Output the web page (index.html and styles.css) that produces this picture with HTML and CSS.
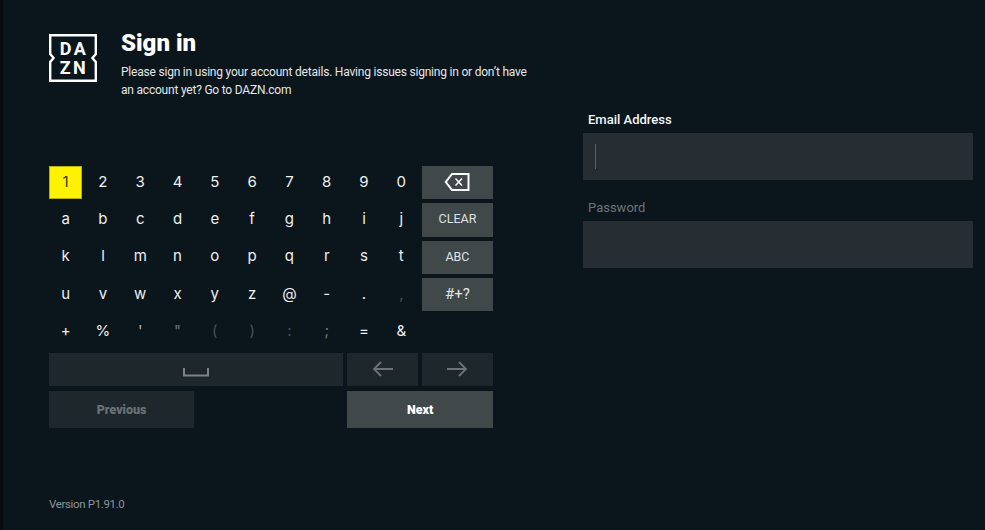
FILE: index.html
```html
<!DOCTYPE html>
<html lang="en">
<head>
<meta charset="utf-8">
<title>Sign in</title>
<link rel="stylesheet" href="styles.css">
</head>
<body>
<main class="page">
  <section class="left">
    <header class="header">
      <div class="logo">
        <svg class="logo-frame" viewBox="0 0 48 48" width="48" height="48" aria-hidden="true">
          <path d="M1.2 1.2H46.8V20L43.4 24L46.8 28V46.8H1.2V28L4.6 24L1.2 20Z" fill="none" stroke="#fff" stroke-width="2.4"/>
        </svg>
        <div class="logo-text"><span>DA</span><span>ZN</span></div>
      </div>
      <div class="intro">
        <h1 class="title">Sign in</h1>
        <p class="desc">Please sign in using your account details. Having issues signing in or don’t have<br>an account yet? Go to DAZN.com</p>
      </div>
    </header>
    <div class="keyboard">
      <div class="key key-focus">1</div><div class="key">2</div><div class="key">3</div><div class="key">4</div><div class="key">5</div><div class="key">6</div><div class="key">7</div><div class="key">8</div><div class="key">9</div><div class="key">0</div>
      <div class="key-side">
        <svg viewBox="0 0 26 20" width="26" height="20" aria-hidden="true"><path d="M24.5 2H8L1.8 10L8 18H24.5Z" fill="none" stroke="#fff" stroke-width="2"/><path d="M11.5 6.5L18 13.5M18 6.5L11.5 13.5" stroke="#fff" stroke-width="1.5" fill="none"/></svg>
      </div>
      <div class="key">a</div><div class="key">b</div><div class="key">c</div><div class="key">d</div><div class="key">e</div><div class="key">f</div><div class="key">g</div><div class="key">h</div><div class="key">i</div><div class="key">j</div>
      <div class="key-side key-label">CLEAR</div>
      <div class="key">k</div><div class="key">l</div><div class="key">m</div><div class="key">n</div><div class="key">o</div><div class="key">p</div><div class="key">q</div><div class="key">r</div><div class="key">s</div><div class="key">t</div>
      <div class="key-side key-label">ABC</div>
      <div class="key">u</div><div class="key">v</div><div class="key">w</div><div class="key">x</div><div class="key">y</div><div class="key">z</div><div class="key">@</div><div class="key">-</div><div class="key">.</div><div class="key key-faint">,</div>
      <div class="key-side key-symbols">#+?</div>
      <div class="key">+</div><div class="key">%</div><div class="key key-mid">'</div><div class="key key-dim">"</div><div class="key key-faint">(</div><div class="key key-faint">)</div><div class="key key-faint">:</div><div class="key key-dim">;</div><div class="key">=</div><div class="key">&amp;</div>
      <div class="key-gap"></div>
      <div class="key-space">
        <svg viewBox="0 0 26 9" width="26" height="9" aria-hidden="true"><path d="M1 0V7.5H25V0" fill="none" stroke="#7d8488" stroke-width="2"/></svg>
      </div>
      <div class="key-arrow key-arrow-left">
        <svg viewBox="0 0 22 16" width="22" height="16" aria-hidden="true"><path d="M21 8H2M9 1L2 8L9 15" fill="none" stroke="#6d7478" stroke-width="1.8"/></svg>
      </div>
      <div class="key-arrow">
        <svg viewBox="0 0 22 16" width="22" height="16" aria-hidden="true"><path d="M1 8H20M13 1L20 8L13 15" fill="none" stroke="#6d7478" stroke-width="1.8"/></svg>
      </div>
      <div class="action action-prev">Previous</div>
      <div class="action action-next">Next</div>
    </div>
    <footer class="version">Version P1.91.0</footer>
  </section>
  <section class="form">
    <div class="field">
      <div class="field-label">Email Address</div>
      <div class="field-input"><span class="caret"></span></div>
    </div>
    <div class="field">
      <div class="field-label field-label-dim">Password</div>
      <div class="field-input"></div>
    </div>
  </section>
</main>
</body>
</html>
```
FILE: styles.css
```css
* { box-sizing: border-box; }
html, body { margin: 0; height: 100%; }
body {
  background: #0a151c;
  border-left: 3px solid #060b0f;
  color: #fff;
  font-family: Roboto, "Liberation Sans", sans-serif;
  overflow: hidden;
}
.page {
  display: flex;
  height: 530px;
  padding-left: 46px;
}
.left {
  width: 444px;
  padding-top: 30px;
  display: flex;
  flex-direction: column;
}
.header {
  display: flex;
  gap: 24px;
  height: 136px;
}
.logo {
  position: relative;
  width: 48px;
  height: 48px;
  margin-top: 4px;
  flex: none;
}
.logo-frame { display: block; }
.logo-text {
  position: absolute;
  inset: 0;
  display: flex;
  flex-direction: column;
  align-items: center;
  justify-content: center;
  font-size: 18px;
  font-weight: 700;
  line-height: 19px;
  letter-spacing: 2.4px;
  padding-left: 2px;
}
.title {
  margin: 0;
  font-size: 24px;
  line-height: 26px;
  font-weight: 900;
}
.desc {
  margin: 7px 0 0;
  font-size: 12px;
  line-height: 18px;
  letter-spacing: -0.21px;
  color: #e4e7e8;
  white-space: nowrap;
}
.keyboard {
  display: grid;
  grid-template-columns: repeat(10, 33.3px) 71px;
  grid-auto-rows: 33.33px;
  column-gap: 4px;
  row-gap: 4px;
}
.key {
  display: flex;
  align-items: center;
  justify-content: center;
  padding-bottom: 3px;
  font-family: Inter, "Liberation Sans", sans-serif;
  font-size: 15px;
  color: #eef0f1;
}
.key-focus { background: #fff200; color: #3a3a10; border: 1px solid #b5ad10; }
.key-mid { color: #b6babc; }
.key-dim { color: #6f7679; }
.key-faint { color: #4a5256; }
.key-side {
  display: flex;
  align-items: center;
  justify-content: center;
  padding-bottom: 2px;
  background: #41484a;
}
.key-label { font-size: 12.5px; color: #dfe2e3; }
.key-symbols { font-size: 15px; color: #e4e6e7; }
.key-space, .key-arrow {
  display: flex;
  justify-content: center;
  background: #1e272c;
}
.key-space {
  grid-column: span 8;
  align-items: flex-end;
  padding-bottom: 9px;
}
.key-arrow { align-items: center; }
.key-arrow-left { grid-column: span 2; }
.action {
  height: 37px;
  margin-top: 1px;
  display: flex;
  align-items: center;
  justify-content: center;
  font-size: 12.5px;
  font-weight: 900;
}
.action-prev {
  grid-column: span 4;
  background: #1e272c;
  color: #6a7175;
}
.action-next {
  grid-column: 9 / 12;
  background: #41484a;
  color: #fff;
}
.version {
  margin-top: 74px;
  font-size: 11.5px;
  line-height: 14px;
  letter-spacing: -0.35px;
  color: #8d9497;
}
.form {
  margin-left: 90px;
  width: 390px;
  padding-top: 111px;
  display: flex;
  flex-direction: column;
  gap: 19px;
}
.field-label {
  font-size: 13px;
  line-height: 18px;
  padding-left: 5px;
  margin-bottom: 4px;
  font-weight: 500;
  color: #f4f5f6;
}
.field-label-dim { color: #6c7478; font-weight: 400; }
.field-input {
  height: 47px;
  background: #272e33;
  display: flex;
  align-items: center;
  padding-left: 12px;
}
.caret {
  width: 1px;
  height: 25px;
  background: #5a6266;
}
```
